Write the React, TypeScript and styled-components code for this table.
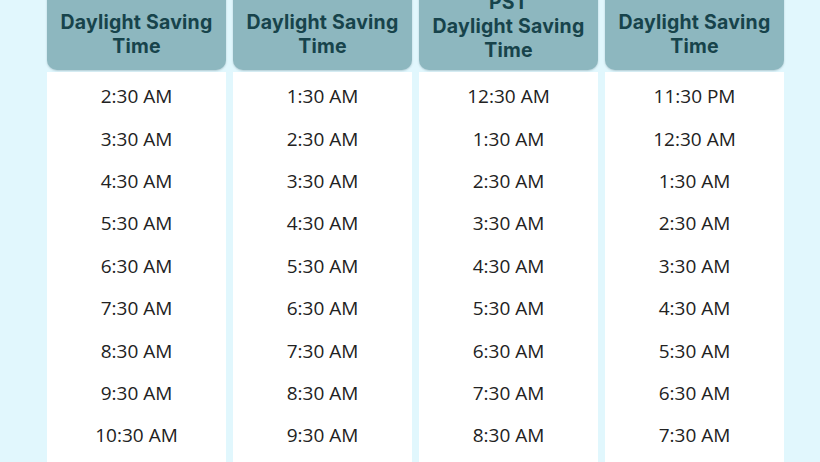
import React from 'react';
import styled, { createGlobalStyle } from 'styled-components';

const GlobalStyle = createGlobalStyle`
  html, body {
    margin: 0;
    padding: 0;
    background: #e1f7fd;
    overflow: hidden;
  }
`;

const Page = styled.div`
  width: 820px;
  height: 462px;
  overflow: hidden;
  background: #e1f7fd;
`;

const Grid = styled.div`
  display: grid;
  grid-template-columns: repeat(4, 179px);
  column-gap: 7px;
  padding-left: 47px;
  margin-top: -40px;
`;

const Column = styled.div`
  display: flex;
  flex-direction: column;
  gap: 2px;
`;

const Header = styled.div<{ $lines: number }>`
  height: 110px;
  box-sizing: border-box;
  background: #8db7bf;
  border-radius: 10px;
  box-shadow: 0 1px 2px rgba(40, 80, 90, 0.25);
  display: flex;
  flex-direction: column;
  justify-content: flex-end;
  align-items: center;
  padding-bottom: ${props => (props.$lines > 2 ? '8px' : '12px')};
  text-align: center;
  font-family: 'Inter', 'Open Sans', sans-serif;
  font-weight: 700;
  font-size: 19.5px;
  letter-spacing: 0.2px;
  line-height: 24px;
  color: #17434b;
`;

const Body = styled.div`
  background: #ffffff;
  padding-top: 3px;
  height: 420px;
`;

const Row = styled.div`
  height: 42.4px;
  display: flex;
  align-items: center;
  justify-content: center;
  font-family: 'Open Sans', 'Liberation Sans', sans-serif;
  font-size: 19px;
  color: #222222;
`;

const columns = [
  {
    title: ['Daylight Saving', 'Time'],
    times: ['2:30 AM', '3:30 AM', '4:30 AM', '5:30 AM', '6:30 AM', '7:30 AM', '8:30 AM', '9:30 AM', '10:30 AM'],
  },
  {
    title: ['Daylight Saving', 'Time'],
    times: ['1:30 AM', '2:30 AM', '3:30 AM', '4:30 AM', '5:30 AM', '6:30 AM', '7:30 AM', '8:30 AM', '9:30 AM'],
  },
  {
    title: ['PST', 'Daylight Saving', 'Time'],
    times: ['12:30 AM', '1:30 AM', '2:30 AM', '3:30 AM', '4:30 AM', '5:30 AM', '6:30 AM', '7:30 AM', '8:30 AM'],
  },
  {
    title: ['Daylight Saving', 'Time'],
    times: ['11:30 PM', '12:30 AM', '1:30 AM', '2:30 AM', '3:30 AM', '4:30 AM', '5:30 AM', '6:30 AM', '7:30 AM'],
  },
];

const App = () => {
  return (
    <Page>
      <GlobalStyle />
      <Grid>
        {columns.map((col, i) => (
          <Column key={i}>
            <Header $lines={col.title.length}>
              {col.title.map(line => (
                <div key={line}>{line}</div>
              ))}
            </Header>
            <Body>
              {col.times.map(t => (
                <Row key={t}>{t}</Row>
              ))}
            </Body>
          </Column>
        ))}
      </Grid>
    </Page>
  );
};

export default App;
